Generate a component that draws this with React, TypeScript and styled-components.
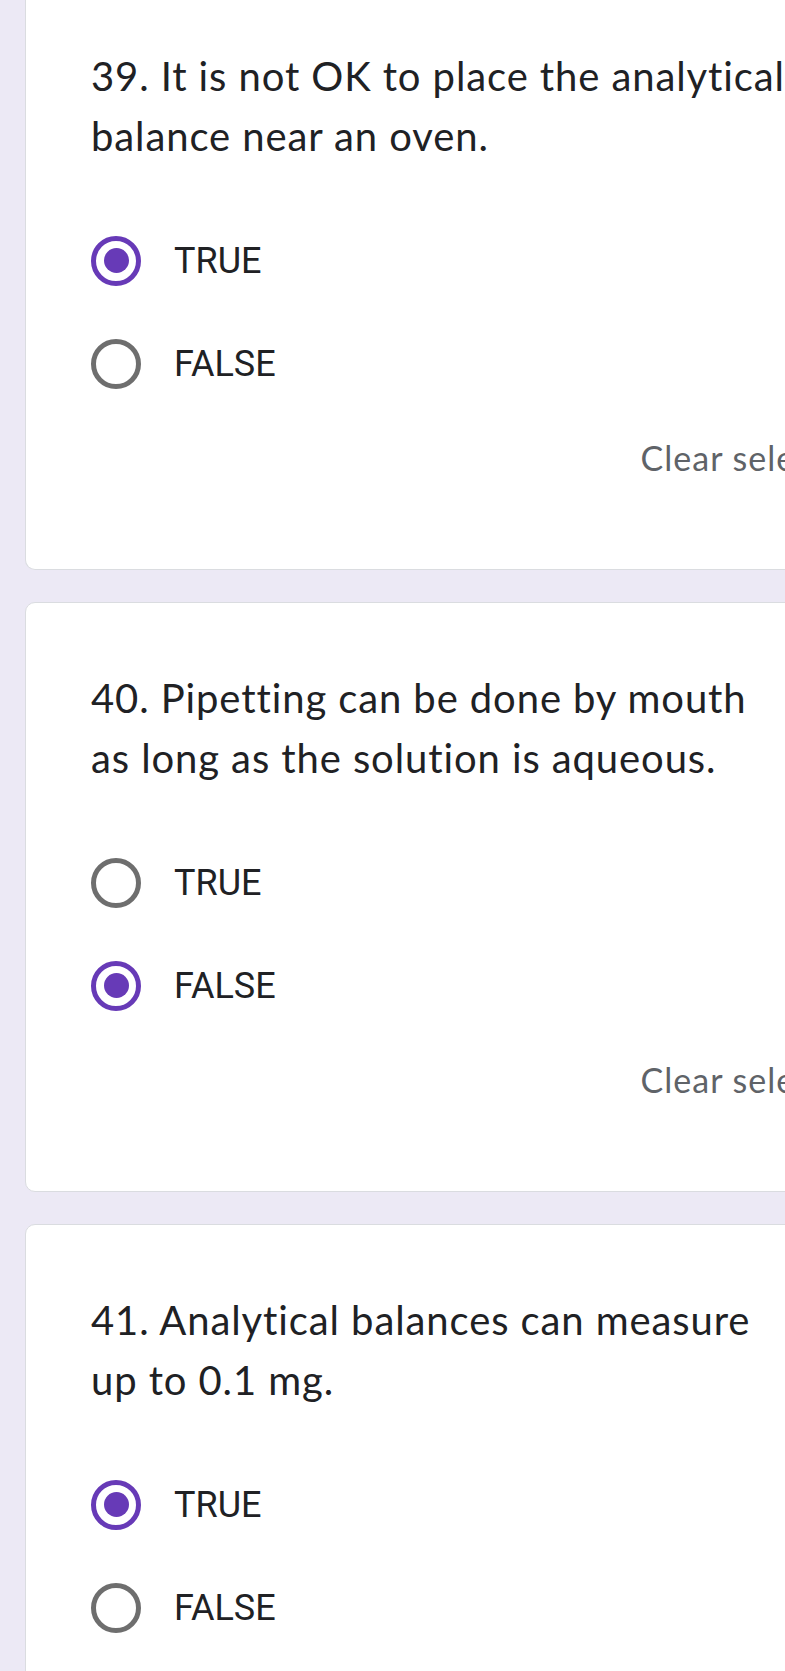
import React, { useState } from 'react';
import styled, { createGlobalStyle } from 'styled-components';

const colors = {
    page: '#ece9f5',
    card: '#ffffff',
    border: '#dadce0',
    text: '#202124',
    grey: '#5f6368',
    ring: '#6e6e6e',
    purple: '#673ab7',
};

const GlobalStyle = createGlobalStyle`
    html, body {
        margin: 0;
        padding: 0;
        overflow: hidden;
        background: ${colors.page};
    }
`;

const Page = styled.div`
    display: flex;
    flex-direction: column;
    gap: 32px;
    padding-left: 25px;
    width: 920px;
    min-height: 1671px;
    background: ${colors.page};
`;

const Card = styled.div<{ $cut?: boolean }>`
    width: 875px;
    box-sizing: border-box;
    background: ${colors.card};
    border: 1px solid ${colors.border};
    border-top: ${(p) => (p.$cut ? 'none' : `1px solid ${colors.border}`)};
    border-radius: ${(p) => (p.$cut ? '0 0 10px 10px' : '10px')};
    padding: ${(p) => (p.$cut ? '46px' : '65px')} 24px 91px 65px;
`;

const Question = styled.div`
    font-family: Lato, 'Noto Sans', sans-serif;
    font-size: 40px;
    letter-spacing: 0.9px;
    line-height: 60px;
    color: ${colors.text};
    white-space: nowrap;
    margin-bottom: 43px;
`;

const Options = styled.div`
    display: flex;
    flex-direction: column;
`;

const Option = styled.label`
    display: flex;
    align-items: center;
    gap: 33px;
    height: 103px;
    cursor: pointer;
`;

const Ring = styled.span<{ $on: boolean }>`
    width: 50px;
    height: 50px;
    box-sizing: border-box;
    border-radius: 50%;
    border: 5px solid ${(p) => (p.$on ? colors.purple : colors.ring)};
    display: flex;
    align-items: center;
    justify-content: center;
    flex-shrink: 0;
`;

const Dot = styled.span`
    width: 25px;
    height: 25px;
    border-radius: 50%;
    background: ${colors.purple};
`;

const OptionText = styled.span`
    font-family: Roboto, 'Liberation Sans', sans-serif;
    font-size: 36px;
    color: ${colors.text};
`;

const ClearRow = styled.div`
    display: flex;
    justify-content: flex-end;
    margin-top: 23px;
`;

const ClearButton = styled.button`
    border: 0;
    background: none;
    padding: 0;
    font-family: Lato, 'Noto Sans', sans-serif;
    font-size: 34px;
    letter-spacing: 1px;
    line-height: 40px;
    color: ${colors.grey};
    cursor: pointer;
`;

type Item = {
    lines: string[];
    answer: string;
};

const items: Item[] = [
    { lines: ['39. It is not OK to place the analytical', 'balance near an oven.'], answer: 'TRUE' },
    { lines: ['40. Pipetting can be done by mouth', 'as long as the solution is aqueous.'], answer: 'FALSE' },
    { lines: ['41. Analytical balances can measure', 'up to 0.1 mg.'], answer: 'TRUE' },
];

const QuestionCard: React.FC<{ item: Item; cut?: boolean }> = ({ item, cut }) => {
    const [value, setValue] = useState<string>(item.answer);
    return (
        <Card $cut={cut}>
            <Question>
                {item.lines[0]}
                <br />
                {item.lines[1]}
            </Question>
            <Options>
                {['TRUE', 'FALSE'].map((opt) => (
                    <Option key={opt} onClick={() => setValue(opt)}>
                        <Ring $on={value === opt}>{value === opt && <Dot />}</Ring>
                        <OptionText>{opt}</OptionText>
                    </Option>
                ))}
            </Options>
            <ClearRow>
                <ClearButton onClick={() => setValue('')}>Clear selection</ClearButton>
            </ClearRow>
        </Card>
    );
};

export default function App() {
    return (
        <>
            <GlobalStyle />
            <Page>
                {items.map((item, i) => (
                    <QuestionCard key={i} item={item} cut={i === 0} />
                ))}
            </Page>
        </>
    );
}
